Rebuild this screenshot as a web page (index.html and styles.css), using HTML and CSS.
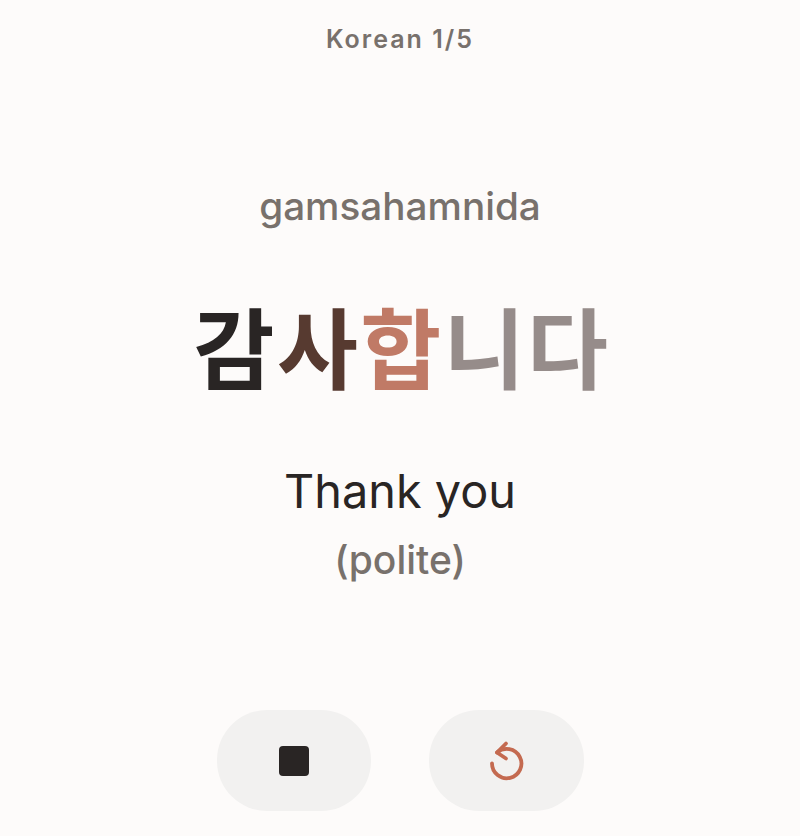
FILE: index.html
```html
<!DOCTYPE html>
<html lang="ko">
<head>
  <meta charset="UTF-8" />
  <meta name="viewport" content="width=device-width, initial-scale=1.0"/>
  <title>Korean 1/5</title>
  <link rel="stylesheet" href="styles.css">
</head>
<body>

<div class="screen">
  <div class="progress">Korean 1/5</div>

  <div class="card">
    <div class="romanized">gamsahamnida</div>
    <div class="phrase">
      <span class="said">감</span><span class="fading">사</span><span class="current">합</span><span class="upcoming">니다</span>
    </div>
    <div class="meaning">Thank you</div>
    <div class="note">(polite)</div>
  </div>

  <!-- Controls -->
  <div class="controls">
    <button class="ctrl-btn" aria-label="Stop">
      <span class="stop-icon"></span>
    </button>
    <button class="ctrl-btn" aria-label="Replay">
      <svg class="replay-icon" viewBox="0 0 40 44" fill="none" stroke="#c46a50" stroke-width="3.8" stroke-linecap="round" stroke-linejoin="round">
        <path d="M6 24.5a14.7 14.7 0 1 0 5-11"/>
        <path d="M20 4.5 11 13.5l9 6"/>
      </svg>
    </button>
  </div>
</div>

</body>
</html>
```

FILE: styles.css
```css
body {
  margin: 0;
  font-family: "Inter", "Noto Sans CJK KR", sans-serif;
  background: #fdfbfa;
}

.screen {
  height: 836px;
  display: flex;
  flex-direction: column;
  align-items: center;
  box-sizing: border-box;
  padding-top: 24px;
  overflow: hidden;
}

.progress {
  font-size: 25px;
  line-height: 30px;
  font-weight: 600;
  letter-spacing: 2px;
  color: #78716c;
}

.card {
  display: flex;
  flex-direction: column;
  align-items: center;
  margin-top: 127px;
}

.romanized {
  font-size: 38.7px;
  line-height: 50px;
  font-weight: 500;
  color: #78716c;
}

.phrase {
  margin-top: 53px;
  padding-left: 4px;
  font-family: "Noto Sans CJK KR", sans-serif;
  font-size: 88px;
  line-height: 120px;
  font-weight: 700;
  letter-spacing: 2.4px;
  white-space: nowrap;
}

.said { color: #292524; }
.fading { color: #573a30; }
.current { color: #c07a66; }
.upcoming { color: #968c8a; }

.meaning {
  margin-top: 57px;
  font-size: 46.8px;
  line-height: 60px;
  font-weight: 400;
  color: #292524;
}

.note {
  margin-top: 17px;
  font-size: 39px;
  line-height: 44px;
  font-weight: 500;
  color: #78716c;
}

.controls {
  display: flex;
  gap: 58px;
  margin-top: 128px;
}

.ctrl-btn {
  width: 154.5px;
  height: 101px;
  border: none;
  border-radius: 50px;
  background: #f2f1f0;
  display: flex;
  align-items: center;
  justify-content: center;
  padding: 0;
}

.stop-icon {
  display: block;
  width: 30px;
  height: 30px;
  border-radius: 4px;
  background: #292524;
}

.replay-icon {
  width: 40px;
  height: 44px;
}
```
